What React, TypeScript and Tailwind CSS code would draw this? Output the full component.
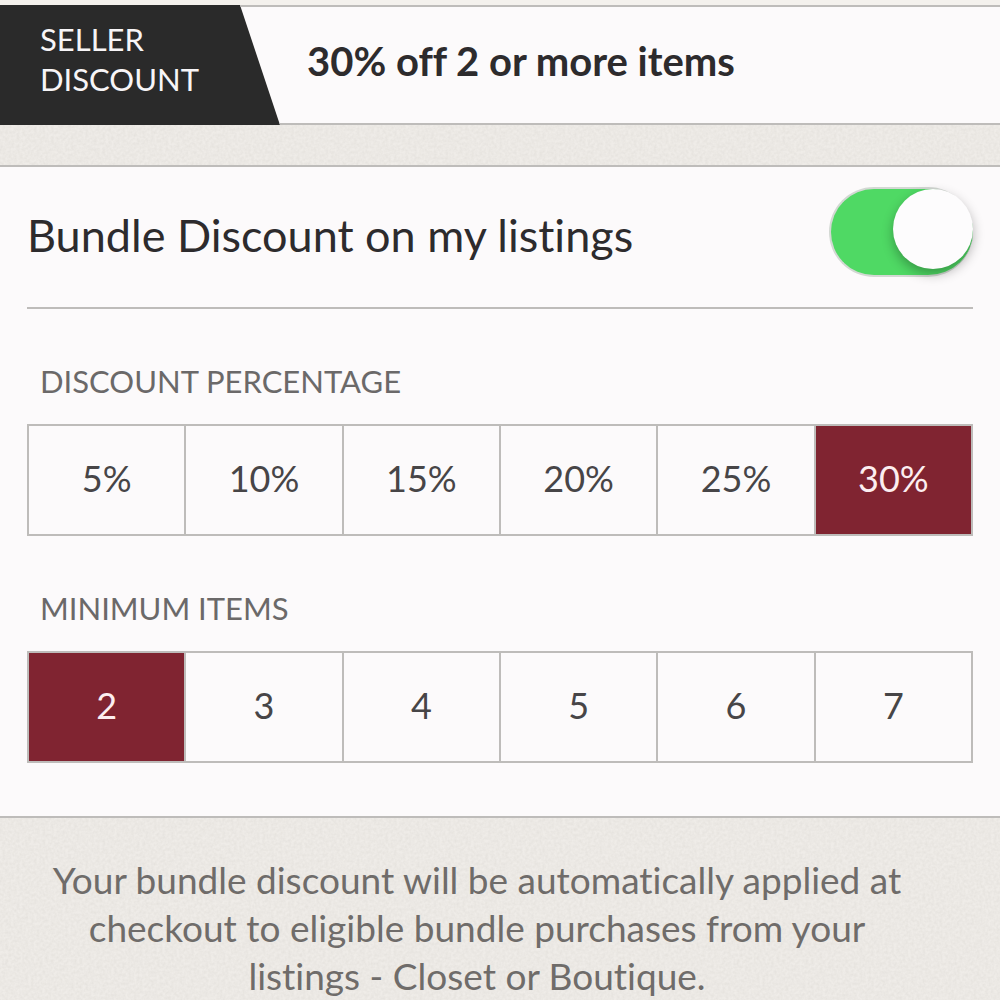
import { useState } from 'react';

const DISCOUNTS = [5, 10, 15, 20, 25, 30];
const MIN_ITEMS = [2, 3, 4, 5, 6, 7];

type SegmentedProps = {
  legend: string;
  name: string;
  options: number[];
  suffix?: string;
  value: number;
  onChange: (value: number) => void;
};

function Segmented({ legend, name, options, suffix = '', value, onChange }: SegmentedProps) {
  return (
    <fieldset className="mt-[52px]">
      <legend className="mb-[23px] ml-[13px] text-[31px] leading-10 text-[#6b6969]">{legend}</legend>
      <div className="grid grid-cols-6 gap-[2px] border-2 border-[#bebcba] bg-[#bebcba]">
        {options.map((option) => (
          <label
            key={option}
            className="relative flex h-[108px] cursor-pointer items-center justify-center bg-[#fcfafb] pb-1 text-[36px] text-[#474547] has-checked:bg-[#802431] has-checked:text-[#fceef0]"
          >
            <input
              type="radio"
              name={name}
              value={option}
              checked={value === option}
              onChange={() => onChange(option)}
              className="sr-only"
            />
            {option}
            {suffix}
          </label>
        ))}
      </div>
    </fieldset>
  );
}

// Fine paper grain behind the whole page
function PaperGrain() {
  return (
    <svg className="pointer-events-none absolute inset-0 -z-10 h-full w-full" aria-hidden="true">
      <filter id="grain">
        <feTurbulence type="fractalNoise" baseFrequency="0.35" numOctaves="2" seed="4" />
        <feColorMatrix values="0 0 0 0 0.5  0 0 0 0 0.48  0 0 0 0 0.44  0.3 0 0 0 -0.08" />
      </filter>
      <rect width="100%" height="100%" filter="url(#grain)" />
    </svg>
  );
}

export default function App() {
  const [enabled, setEnabled] = useState(true);
  const [discount, setDiscount] = useState(30);
  const [minItems, setMinItems] = useState(2);

  return (
    <main className="relative isolate min-h-screen overflow-hidden bg-[#efece8] font-['Lato',sans-serif] [font-variant-ligatures:none]">
      <PaperGrain />

      {/* Current discount */}
      <header className="border-t-[5px] border-[#f4f1ed]">
        <div className="flex h-[120px] bg-[#fcfafb]">
          <div className="w-[280px] shrink-0 bg-[#2a2a2a] pt-[14px] pl-10 text-[31px] leading-10 text-[#f7f5f7] [clip-path:polygon(0_0,240px_0,100%_100%,0_100%)]">
            SELLER
            <br />
            DISCOUNT
          </div>
          <h1 className="-ml-10 flex flex-1 items-center border-y-2 border-[#bebcba] pb-2 pl-[67px] text-[40px] font-bold text-[#2d2b2d] [clip-path:polygon(0_0,100%_0,100%_100%,40px_100%)]">
            30% off 2 or more items
          </h1>
        </div>
      </header>

      {/* Bundle settings */}
      <section className="mt-10 border-y-2 border-[#bebcba] bg-[#fcfafb] px-[27px] pb-[53px]">
        <div className="flex items-start justify-between border-b-2 border-[#bebcba] pt-5 pb-6">
          <label htmlFor="bundle" className="text-[45px] leading-[96px] text-[#2d2b2d]">
            Bundle Discount on my listings
          </label>
          <input
            id="bundle"
            type="checkbox"
            role="switch"
            checked={enabled}
            onChange={(e) => setEnabled(e.target.checked)}
            className="h-[90px] w-36 shrink-0 cursor-pointer appearance-none rounded-full border-2 border-r-0 border-[#d3d8d3] bg-[#e5e5e5] before:block before:size-20 before:rounded-full before:bg-[#fdfcfd] before:shadow-[0_5px_12px_rgba(0,0,0,0.3)] checked:bg-[#4fd964] checked:before:ml-auto"
          />
        </div>

        <Segmented
          legend="DISCOUNT PERCENTAGE"
          name="discount"
          options={DISCOUNTS}
          suffix="%"
          value={discount}
          onChange={setDiscount}
        />
        <Segmented
          legend="MINIMUM ITEMS"
          name="min-items"
          options={MIN_ITEMS}
          value={minItems}
          onChange={setMinItems}
        />
      </section>

      <p className="pt-[38px] pr-[86px] pl-10 text-center text-[37px] leading-[48px] text-[#6f6c6a]">
        Your bundle discount will be automatically applied at checkout to eligible bundle purchases from your
        listings - Closet or Boutique.
      </p>
    </main>
  );
}
